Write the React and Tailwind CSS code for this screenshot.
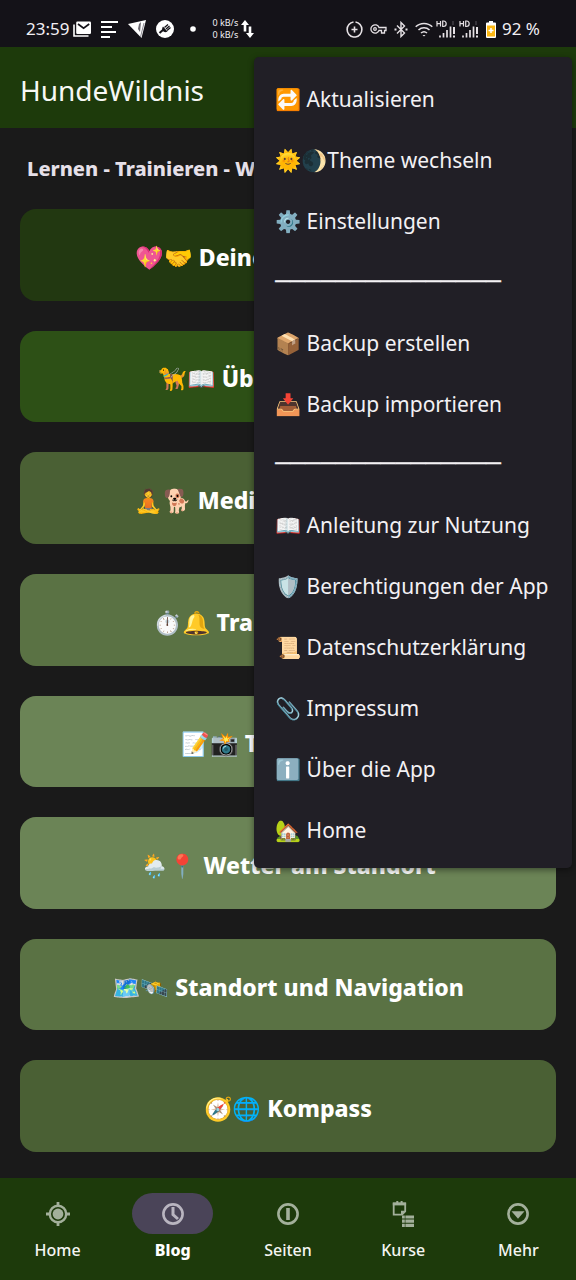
import React from "react";

const cards = [
  { emoji: "💖🤝", label: "Deine Hundefreunde", bg: "bg-[#223811]" },
  { emoji: "🦮📖", label: "Übungen & Infos", bg: "bg-[#2d5016]" },
  { emoji: "🧘🐕", label: "Meditation mit Hund", bg: "bg-[#4a6034]" },
  { emoji: "⏱️🔔", label: "Training & Klingel", bg: "bg-[#5a7244]" },
  { emoji: "📝📸", label: "Tagesbericht", bg: "bg-[#6b8456]" },
  { emoji: "🌦️📍", label: "Wetter am Standort", bg: "bg-[#6b8456]" },
  { emoji: "🗺️🛰️", label: "Standort und Navigation", bg: "bg-[#5a7244]" },
  { emoji: "🧭🌐", label: "Kompass", bg: "bg-[#4a6034]" },
];

const menu = [
  "🔁 Aktualisieren",
  "🌞🌒Theme wechseln",
  "⚙️ Einstellungen",
  null,
  "📦 Backup erstellen",
  "📥 Backup importieren",
  null,
  "📖 Anleitung zur Nutzung",
  "🛡️ Berechtigungen der App",
  "📜 Datenschutzerklärung",
  "📎 Impressum",
  "ℹ️ Über die App",
  "🏡 Home",
];

function Signal() {
  return (
    <svg width="20" height="18" viewBox="0 0 20 18" fill="none" stroke="#e6e1e5">
      <path d="M1 1v5.500M4.500 1v5.500M1 3.700h3.500M6.700 1v5.500h.8q2.700 0 2.700-2.700T7.500 1z" strokeWidth="1.200" />
      <path d="M4 17.500v-2M7.500 17.500v-4.500M11 17.500V10M14.500 17.500V6.500" strokeWidth="1.700" />
      <path d="M18 7v7M18 15.500v2" strokeWidth="2" />
      <path d="M17 1v4" stroke="#56535b" />
    </svg>
  );
}

function StatusBar() {
  return (
    <div className="flex h-[47px] shrink-0 items-center justify-between bg-[#141218] pt-[11px] pr-9 pl-[26px] text-[#f2eff4]">
      <div className="flex items-center gap-4">
        <div className="flex items-center gap-1">
          <span className="text-[17px] leading-5">23:59</span>
          <div className="flex items-center gap-2.5">
            <svg width="18" height="16" viewBox="0 0 18 16" fill="none">
              <path d="M1 3.500V15h14.500" stroke="#fff" strokeWidth="1.600" />
              <rect x="3.200" y="0.500" width="14.800" height="12.500" rx="1.200" fill="#fff" />
              <path d="M5 3l5.600 4.200L16.200 3" stroke="#141218" strokeWidth="1.700" />
            </svg>
            <svg width="17" height="18" viewBox="0 0 17 18" stroke="#fff" strokeWidth="2">
              <path d="M0 2h17M0 7h11M0 12h15M0 17h9" />
            </svg>
            <svg width="18" height="18" viewBox="0 0 18 18">
              <path d="M0 4L18 0l-4.500 18z" fill="#fff" />
              <path d="M11 4l2-2-1 10-2-3z" fill="#6c6971" />
              <path d="M12.500 17L16 3" stroke="#8d8a92" />
            </svg>
            <svg width="18" height="18" viewBox="0 0 18 18" fill="none">
              <circle cx="9" cy="9" r="9" fill="#fff" />
              <path d="M3.500 13l4-3.500" stroke="#141218" strokeWidth="2" />
              <path d="M7 6.500l4.500 5c-2 1.300-3.600.8-4.600-.4S5.800 8 7 6.500z" fill="#141218" />
              <path d="M8.500 7.500l3.500-3M10 9l3.500-3M11 10.500l3.500-3" stroke="#141218" strokeWidth="1.300" />
            </svg>
          </div>
        </div>
        <svg width="6" height="6" viewBox="0 0 6 6">
          <circle cx="3" cy="3" r="2.800" fill="#fff" />
        </svg>
        <div className="flex items-center gap-[3px]">
          <span className="text-[9px] leading-3">
            0 kB/s
            <br />
            0 kB/s
          </span>
          <svg width="13" height="18" viewBox="0 0 13 18" fill="#fff">
            <path d="M4 0l4 5H5.300v6.500H2.700V5H0zM9 18l-4-5h2.700V6.500h2.600V13H13z" />
          </svg>
        </div>
      </div>
      <div className="flex items-center gap-[7px]">
        <svg width="17" height="17" viewBox="0 0 17 17" fill="none" stroke="#e6e1e5" strokeWidth="1.600">
          <path d="M9.500 1a7.600 7.600 0 0 1 0 15M7.500 1a7.600 7.600 0 0 0 0 15M6.500 16h4" />
          <path d="M8.500 5.500v6M5.500 8.500h6" />
        </svg>
        <svg width="17" height="12" viewBox="0 0 17 12" fill="none" stroke="#e6e1e5" strokeWidth="1.300">
          <path d="M9 4.500h7v3h-1.500v2.500h-3V7.500H9a4.200 4.200 0 1 1 0-3z" />
          <circle cx="5" cy="6" r="1.300" />
        </svg>
        <svg width="14" height="17" viewBox="0 0 14 17" fill="none" stroke="#e6e1e5" strokeWidth="1.400">
          <path d="M3 4.500l7.500 7.500L7 15.500v-14L10.500 5 3 12.500" />
          <path d="M0.500 8.500h2M11.500 8.500h2" strokeWidth="2" />
        </svg>
        <div className="flex items-center gap-[3px]">
          <svg width="18" height="15" viewBox="0 0 18 15" fill="none" stroke="#e6e1e5" strokeWidth="1.500">
            <path d="M.7 4.800a12 12 0 0 1 16.600 0M3.500 8a8 8 0 0 1 11 0M6 11a4.500 4.500 0 0 1 6 0" />
            <path d="M7.500 13L9 14.600 10.500 13z" fill="#e6e1e5" stroke="none" />
          </svg>
          <Signal />
          <Signal />
        </div>
        <div className="flex items-center gap-1.5">
          <svg width="10" height="17" viewBox="0 0 10 17">
            <path d="M3 0h4v1.500h2q1 0 1 1V16q0 1-1 1H1q-1 0-1-1V2.500q0-1 1-1h2z" fill="#fff" />
            <path d="M1 4.500h8V15.500H1z" fill="#fdb813" />
            <path d="M5 7v5M2.500 9.500h5" stroke="#fff" strokeWidth="1.500" />
          </svg>
          <span className="text-[17px] leading-5">92 %</span>
        </div>
      </div>
    </div>
  );
}

const icons = {
  Home: (
    <g>
      <circle cx="12" cy="12" r="8.200" strokeWidth="2.400" />
      <circle cx="12" cy="12" r="5.400" fill="currentColor" stroke="none" />
      <path d="M12 0v4M12 20v4M0 12h4M20 12h4" strokeWidth="2.800" />
    </g>
  ),
  Blog: (
    <g>
      <circle cx="12" cy="12" r="9.600" strokeWidth="2.600" />
      <path d="M12 5v7.500l5 4.500" strokeWidth="3" />
    </g>
  ),
  Seiten: (
    <g>
      <circle cx="12" cy="12" r="9.600" strokeWidth="2.600" />
      <path d="M12 6v12" strokeWidth="3.600" />
    </g>
  ),
  Kurse: (
    <g>
      <path d="M2.700 1.500V12.700H11L14.200 9.500V1.500z" strokeWidth="1.800" />
      <path d="M10 13V8.800h5z" fill="currentColor" stroke="none" />
      <path d="M1.800 2h13.300" strokeWidth="2.800" />
      <path d="M6.300-1v2.500M10.600-1v2.500" strokeWidth="2" />
      <path d="M11 15h2.800M14.400 15H23M11 19.200h2.800M14.400 19.200H23M11 23.400h2.800M14.400 23.400H23" strokeWidth="3.200" />
    </g>
  ),
  Mehr: (
    <g>
      <circle cx="12" cy="12" r="9.600" strokeWidth="2.600" />
      <path d="M5.500 9.300h13L12 16.800z" fill="currentColor" stroke="none" />
    </g>
  ),
};

function BottomNav() {
  return (
    <nav className="grid h-[102px] shrink-0 grid-cols-5 bg-[#1d3a0b] pt-[15px]">
      {Object.keys(icons).map((name) => {
        const active = name === "Blog";
        return (
          <button key={name} type="button" className="flex flex-col items-center gap-1">
            <span
              className={
                active
                  ? "flex h-[41px] w-[81px] items-center justify-center rounded-full bg-[#4a4458] text-[#b9b5c0]"
                  : "flex h-[41px] w-[81px] items-center justify-center text-[#a3b09b]"
              }
            >
              <svg width="24" height="24" viewBox="0 0 24 24" fill="none" stroke="currentColor" className="overflow-visible">
                {icons[name]}
              </svg>
            </span>
            <span
              className={
                active
                  ? "text-[16px] leading-6 font-extrabold text-white"
                  : "text-[16px] leading-6 font-medium text-[#f4f5f2]"
              }
            >
              {name}
            </span>
          </button>
        );
      })}
    </nav>
  );
}

function OverflowMenu() {
  return (
    <ul className="absolute top-[57px] right-1 flex h-[811px] w-[318px] flex-col rounded-[5px] bg-[#211f26] pt-3 pb-2 shadow-[0_2px_6px_rgba(0,0,0,0.45)]">
      {menu.map((item, i) => (
        <li key={i} className="flex flex-1 items-center px-[21px] text-[21px] leading-7 text-[#f3f1f4]">
          {item ? (
            <button type="button" className="w-full text-left whitespace-nowrap">
              {item}
            </button>
          ) : (
            <span className="font-['DejaVu_Sans'] text-[25px] leading-7">───────────────</span>
          )}
        </li>
      ))}
    </ul>
  );
}

export default function App() {
  return (
    <div className="relative flex min-h-screen flex-col bg-[#1a1a1a] font-['Noto_Sans','Noto_Color_Emoji',sans-serif]">
      <StatusBar />
      <header className="flex h-[81px] shrink-0 items-center bg-[#1d3a0b] px-5 pt-1">
        <h1 className="text-[28px] leading-9 text-[#f7f8f5]">HundeWildnis</h1>
      </header>
      <main className="flex flex-1 flex-col px-5 pb-[26px]">
        <p className="flex h-[81px] items-center px-[7px] text-[20px] leading-7 font-extrabold text-[#e6e0e9]">
          Lernen - Trainieren - Wachsen
        </p>
        <div className="flex flex-1 flex-col gap-[30px]">
          {cards.map((c) => (
            <button
              key={c.label}
              type="button"
              className={`flex min-h-16 flex-1 items-center justify-center gap-1.5 rounded-2xl pt-1 text-[23px] leading-8 font-extrabold text-white ${c.bg}`}
            >
              <span className="font-normal">{c.emoji}</span>
              <span>{c.label}</span>
            </button>
          ))}
        </div>
      </main>
      <BottomNav />
      <OverflowMenu />
    </div>
  );
}
